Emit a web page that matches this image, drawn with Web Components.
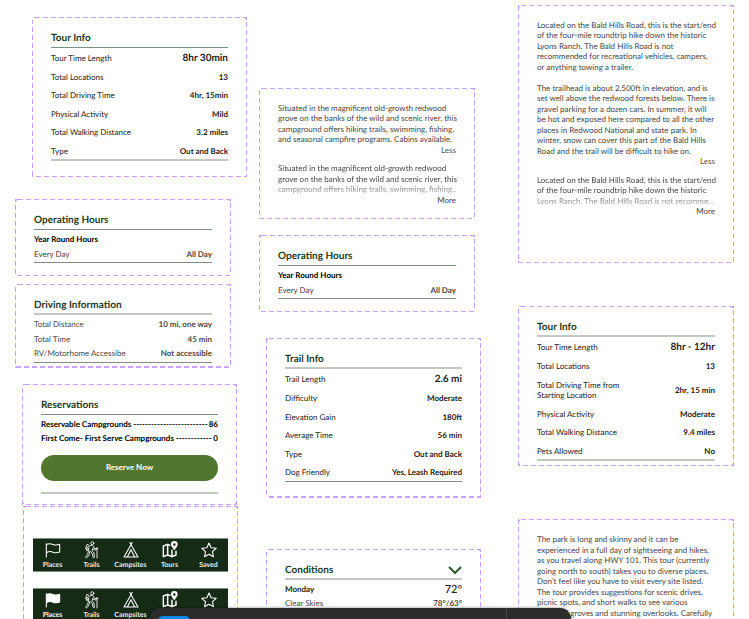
<!DOCTYPE html>
<html lang="en">
<head>
<meta charset="utf-8">
<title>Park guide components</title>
<style>
  :root {
    --green-dark: #1c3a1c;
    --green: #50762f;
    --nav: #152b16;
    --frame: #c9a0ff;
    --rule: #7d8f80;
    --rule-soft: #c3c9c1;
    --text: #222;
    --muted: #484848;
  }
  html, body { height: 100%; }
  body {
    margin: 0;
    overflow: hidden;
    background: #fff;
    color: var(--text);
    font: 8px/1.31 Lato, "Liberation Sans", sans-serif;
    text-rendering: geometricPrecision;
  }
</style>
</head>
<body>
<design-board>
  <board-column slot="left" style="--start:17px">
    <dashed-frame style="--indent:17px;--bottom:16px">
      <info-section heading="Tour Info" end="soft">
        <info-row label="Tour Time Length" value="8hr 30min" large></info-row>
        <info-row label="Total Locations" value="13"></info-row>
        <info-row label="Total Driving Time" value="4hr, 15min"></info-row>
        <info-row label="Physical Activity" value="Mild"></info-row>
        <info-row label="Total Walking Distance" value="3.2 miles"></info-row>
        <info-row label="Type" value="Out and Back"></info-row>
      </info-section>
    </dashed-frame>
    <dashed-frame style="--above:22px;--outdent:16px;--bottom:13px">
      <info-section heading="Operating Hours" compact>
        <info-row label="Year Round Hours" strong></info-row>
        <info-row label="Every Day" value="All Day" muted></info-row>
      </info-section>
    </dashed-frame>
    <dashed-frame style="--above:8px;--outdent:16px;--bottom:5px">
      <info-section heading="Driving Information" compact start="soft">
        <info-row label="Total Distance" value="10 mi, one way" muted></info-row>
        <info-row label="Total Time" value="45 min" muted></info-row>
        <info-row label="RV/Motorhome Accessibe" value="Not accessible" muted></info-row>
      </info-section>
    </dashed-frame>
    <dashed-frame style="--above:16px;--indent:7px;--outdent:10px;--bottom:11px">
      <info-section heading="Reservations" compact end="soft">
        <info-row label="Reservable Campgrounds -------------------------" value="86" strong></info-row>
        <info-row label="First Come- First Serve Campgrounds ------------" value="0" strong></info-row>
        <reserve-button>Reserve Now</reserve-button>
      </info-section>
    </dashed-frame>
    <dashed-frame style="--above:1px;--indent:8px;--outdent:9px;--top:32px;--side:10px">
      <nav-bar></nav-bar>
      <nav-bar active></nav-bar>
    </dashed-frame>
  </board-column>

  <board-column slot="middle" style="--start:88px">
    <dashed-frame style="--outdent:6px;--bottom:14px">
      <expandable-text open>Situated in the magnificent old-growth redwood grove on the banks of the wild and scenic river, this campground offers hiking trails, swimming, fishing, and seasonal campfire programs. Cabins available.</expandable-text>
      <expandable-text>Situated in the magnificent old-growth redwood grove on the banks of the wild and scenic river, this campground offers hiking trails, swimming, fishing..</expandable-text>
    </dashed-frame>
    <dashed-frame style="--above:16px;--outdent:6px;--bottom:13px">
      <info-section heading="Operating Hours" compact>
        <info-row label="Year Round Hours" strong></info-row>
        <info-row label="Every Day" value="All Day" muted></info-row>
      </info-section>
    </dashed-frame>
    <dashed-frame style="--above:26px;--indent:7px;--bottom:16px">
      <info-section heading="Trail Info" start="soft">
        <info-row label="Trail Length" value="2.6 mi" large></info-row>
        <info-row label="Difficulty" value="Moderate"></info-row>
        <info-row label="Elevation Gain" value="180ft"></info-row>
        <info-row label="Average Time" value="56 min"></info-row>
        <info-row label="Type" value="Out and Back"></info-row>
        <info-row label="Dog Friendly" value="Yes, Leash Required"></info-row>
      </info-section>
    </dashed-frame>
    <dashed-frame style="--above:51px;--indent:7px">
      <info-section heading="Conditions" compact start="soft" collapsible>
        <weather-day day="Monday" temp="72°" sky="Clear Skies" range="78°/63°"></weather-day>
      </info-section>
    </dashed-frame>
  </board-column>

  <board-column slot="right" style="--start:5px">
    <dashed-frame style="--bottom:47px">
      <expandable-text open>Located on the Bald Hills Road, this is the start/end of the four-mile roundtrip hike down the historic Lyons Ranch. The Bald Hills Road is not recommended for recreational vehicles, campers, or anything towing a trailer.<br><br>The trailhead is about 2,500ft in elevation, and is set well above the redwood forests below. There is gravel parking for a dozen cars. In summer, it will be hot and exposed here compared to all the other places in Redwood National and state park. In winter, snow can cover this part of the Bald Hills Road and the trail will be difficult to hike on.</expandable-text>
      <expandable-text>Located on the Bald Hills Road, this is the start/end of the four-mile roundtrip hike down the historic Lyons Ranch. The Bald Hills Road is not recomme...</expandable-text>
    </dashed-frame>
    <dashed-frame style="--above:43px;--bottom:5px">
      <info-section heading="Tour Info" start="soft" end="soft">
        <info-row label="Tour Time Length" value="8hr - 12hr" large></info-row>
        <info-row label="Total Locations" value="13"></info-row>
        <info-row label="Total Driving Time from Starting Location" value="2hr, 15 min"></info-row>
        <info-row label="Physical Activity" value="Moderate"></info-row>
        <info-row label="Total Walking Distance" value="9.4 miles"></info-row>
        <info-row label="Pets Allowed" value="No"></info-row>
      </info-section>
    </dashed-frame>
    <dashed-frame style="--above:53px">
      <expandable-text open>The park is long and skinny and it can be experienced in a full day of sightseeing and hikes, as you travel along HWY 101. This tour (currently going north to south) takes you to diverse places. Don’t feel like you have to visit every site listed. The tour provides suggestions for scenic drives, picnic spots, and short walks to see various redwood groves and stunning overlooks. Carefully</expandable-text>
    </dashed-frame>
  </board-column>

  <tool-dock slot="dock"></tool-dock>
</design-board>

<script>
const define = (name, render) => {
  customElements.define(name, class extends HTMLElement {
    constructor() {
      super();
      this.attachShadow({ mode: 'open' });
    }
    connectedCallback() {
      if (this.shadowRoot.childNodes.length) return;
      const t = document.createElement('template');
      t.innerHTML = render(this);
      this.shadowRoot.append(t.content.cloneNode(true));
    }
  });
};

define('design-board', () => `
  <style>
    :host {
      display: grid;
      grid-template-columns: 244fr 259fr 216fr;
      align-items: start;
      padding: 0 15px;
      height: 100%;
      overflow: hidden;
      box-sizing: border-box;
    }
    slot { display: block; min-width: 0; }
    .left { padding-right: 12px; }
    .middle { padding-right: 37px; }
  </style>
  <slot class="left" name="left"></slot>
  <slot class="middle" name="middle"></slot>
  <slot name="right"></slot>
  <slot name="dock"></slot>`);

define('board-column', () => `
  <style>
    :host { display: flex; flex-direction: column; padding-top: var(--start); }
  </style>
  <slot></slot>`);

define('dashed-frame', () => `
  <style>
    :host {
      display: flex;
      flex-direction: column;
      gap: 8px;
      position: relative;
      margin: var(--above, 0) var(--outdent, 0) 0 var(--indent, 0);
      padding: var(--top, 15px) var(--side, 19px) var(--bottom, 17px);
    }
    svg { position: absolute; inset: 0; width: 100%; height: 100%; pointer-events: none; }
    rect { fill: none; stroke: var(--frame); stroke-width: 2; stroke-dasharray: 5 3; shape-rendering: crispEdges; }
  </style>
  <svg aria-hidden="true"><rect width="100%" height="100%" rx="3"/></svg>
  <slot></slot>`);

define('info-section', el => `
  <style>
    :host { display: block; }
    header {
      display: flex;
      align-items: center;
      justify-content: space-between;
      padding-bottom: 3px;
      border-bottom: 1px solid var(--rule);
    }
    h2 { margin: 0; font-size: 10px; line-height: 12px; font-weight: 700; color: var(--green-dark); }
    .rows {
      display: flex;
      flex-direction: column;
      gap: 8px;
      padding: 4px 0 3px;
      border-bottom: 1px solid var(--rule);
    }
    :host([compact]) .rows { gap: 4px; }
    :host([start=soft]) header { padding-bottom: 2px; border-bottom: 2px solid var(--rule-soft); }
    :host([end=soft]) .rows { border-bottom: 2px solid var(--rule-soft); }
    button { padding: 0; border: 0; background: none; display: flex; cursor: pointer; }
    svg { width: 14px; height: 8px; fill: none; stroke: #2b5a2b; stroke-width: 2; }
  </style>
  <header>
    <h2>${el.getAttribute('heading')}</h2>
    ${el.hasAttribute('collapsible') ? `<button type="button" aria-label="Collapse ${el.getAttribute('heading')}"><svg viewBox="0 0 14 8"><path d="M1 1l6 6 6-6"/></svg></button>` : ''}
  </header>
  <div class="rows"><slot></slot></div>`);

define('info-row', el => `
  <style>
    :host { display: block; color: var(--text); }
    dl { margin: 0; display: flex; align-items: center; justify-content: space-between; }
    dt { max-width: 100px; }
    dd { margin: 0; font-weight: 700; white-space: nowrap; }
    :host([large]) dd { font-size: 10px; line-height: 12px; }
    :host([muted]) { color: var(--muted); }
    :host([strong]) dt { font-weight: 700; max-width: none; white-space: nowrap; color: #000; }
    :host([strong]) dd { color: #000; }
  </style>
  <dl><dt>${el.getAttribute('label')}</dt><dd>${el.getAttribute('value') || ''}</dd></dl>`);

define('reserve-button', () => `
  <style>
    :host { display: block; padding: 7px 0 8px; }
    button {
      width: 100%;
      height: 26px;
      border: 0;
      border-radius: 13px;
      background: var(--green);
      color: #fff;
      font: inherit;
      font-weight: 700;
      cursor: pointer;
    }
  </style>
  <button type="button"><slot></slot></button>`);

define('expandable-text', el => `
  <style>
    :host { display: flex; flex-direction: column; color: var(--muted); }
    p { margin: 0 -2px 0 0; }
    :host(:not([open])) p {
      mask-image: linear-gradient(#000 60%, rgba(0, 0, 0, .3));
    }
    button {
      align-self: flex-end;
      padding: 0;
      border: 0;
      background: none;
      color: #555;
      font: inherit;
      cursor: pointer;
    }
    :host(:not([open])) button { color: #444; }
  </style>
  <p><slot></slot></p>
  <button type="button">${el.hasAttribute('open') ? 'Less' : 'More'}</button>`);

define('weather-day', el => `
  <style>
    :host { display: flex; flex-direction: column; gap: 2px; color: var(--text); }
    div { display: flex; justify-content: space-between; align-items: center; }
    .temp { font-size: 11px; line-height: 12px; font-weight: 500; }
    .range { font-weight: 500; }
    .sky { color: var(--muted); }
  </style>
  <div><b>${el.getAttribute('day')}</b><span class="temp">${el.getAttribute('temp')}</span></div>
  <div><span class="sky">${el.getAttribute('sky')}</span><span class="range">${el.getAttribute('range')}</span></div>`);

const icons = {
  Places: on => `<path d="M2 2.500v20M2 4c3.500-2 7-1.500 10-.3s6 1.300 10-.2v11.500c-4 1.500-7 1.400-10 .2S5.500 14 2 16" ${on ? 'fill="#fff"' : ''}/>`,
  Trails: () => `<g stroke-width="1.300"><circle cx="12.500" cy="1.900" r="2.300"/><path d="M9.500 5.500c1.500-1 3.600-.6 4.300.8l1.300 3 2.700 1c1 .4.600 2-.6 1.700l-3.600-1.200-.7-1.100-.9 3.500 2.700 2.600 1 6.600c.2 1.400-1.800 1.700-2.200.4l-1-5.800-3.600-3.300-.9 4.800-3.200 4.700c-.9 1.200-2.700.1-1.900-1.200l2.800-4.300 1.800-8.700-1.300.8-.7 2.700c-.4 1.200-2 .8-1.800-.4l.8-3.300zM6.800 4.300L4.500 3.600 2.300 9.700l2.100.9M19.500 8.500v15.500M17.900 9.500h3"/></g>`,
  Campsites: () => `<path d="M10.300 .8L12 4l1.700-3.200M12 4L1.500 22.500h21L12 4M12 11.500L6.500 22.500M12 11.500l5.500 11"/>`,
  Tours: () => `<path d="M12 5L8.500 3.500 2 6v16l6.500-2.500L15 22l6-2.500v-5.500M8.500 3.500v16M15 12.500V22" stroke-width="2.200"/><path fill="#fff" fill-rule="evenodd" stroke="none" d="M18.500-1.500a5 5 0 0 1 5 5c0 3.500-5 9-5 9s-5-5.500-5-9a5 5 0 0 1 5-5zm0 3.200a1.900 1.900 0 1 0 0 3.800 1.900 1.900 0 0 0 0-3.800z"/>`,
  Saved: () => `<path d="M12 1.500l3.200 7 7.600.9-5.600 5.200 1.500 7.600-6.700-3.800-6.700 3.800 1.500-7.600L1.200 9.400l7.600-.9z"/>`
};

define('nav-bar', el => `
  <style>
    :host { display: block; margin-bottom: 8px; }
    nav {
      display: grid;
      grid-template-columns: repeat(5, 1fr);
      padding: 3px 0 1px;
      background: var(--nav);
      border-top: 1px solid var(--rule);
      border-bottom: 1px solid var(--rule);
    }
    a {
      display: flex;
      flex-direction: column;
      align-items: center;
      gap: 3px;
      color: #e9eee9;
      font-size: 7px;
      line-height: 9px;
      font-weight: 700;
      text-decoration: none;
    }
    a[aria-current] { color: #fff; }
    svg { width: 16px; height: 16px; fill: none; stroke: #fff; stroke-width: 1.6; stroke-linejoin: round; stroke-linecap: round; overflow: visible; }
  </style>
  <nav aria-label="Main">
    ${Object.entries(icons).map(([name, draw], i) => {
      const on = i === 0 && el.hasAttribute('active');
      return `<a href="#${name.toLowerCase()}"${on ? ' aria-current="page"' : ''}><svg viewBox="0 0 24 24" aria-hidden="true">${draw(on)}</svg>${name}</a>`;
    }).join('')}
  </nav>`);

define('tool-dock', () => `
  <style>
    :host {
      position: fixed;
      left: 150px;
      right: 178px;
      bottom: 0;
      height: 11px;
      box-sizing: border-box;
      padding: 8px 8px 0;
      display: flex;
      justify-content: space-between;
      border-radius: 13px 13px 0 0;
      background: #2c2c2c;
      box-shadow: 0 0 3px rgba(0, 0, 0, .5);
      overflow: hidden;
    }
    button { width: 32px; height: 32px; flex: none; border: 0; padding: 0; border-radius: 5px; background: #0c8ce9; }
    hr { width: 1px; height: 40px; margin: -8px 56px 0 0; border: 0; background: #444; }
  </style>
  <button type="button" aria-label="Move"></button>
  <hr>`);
</script>
</body>
</html>
